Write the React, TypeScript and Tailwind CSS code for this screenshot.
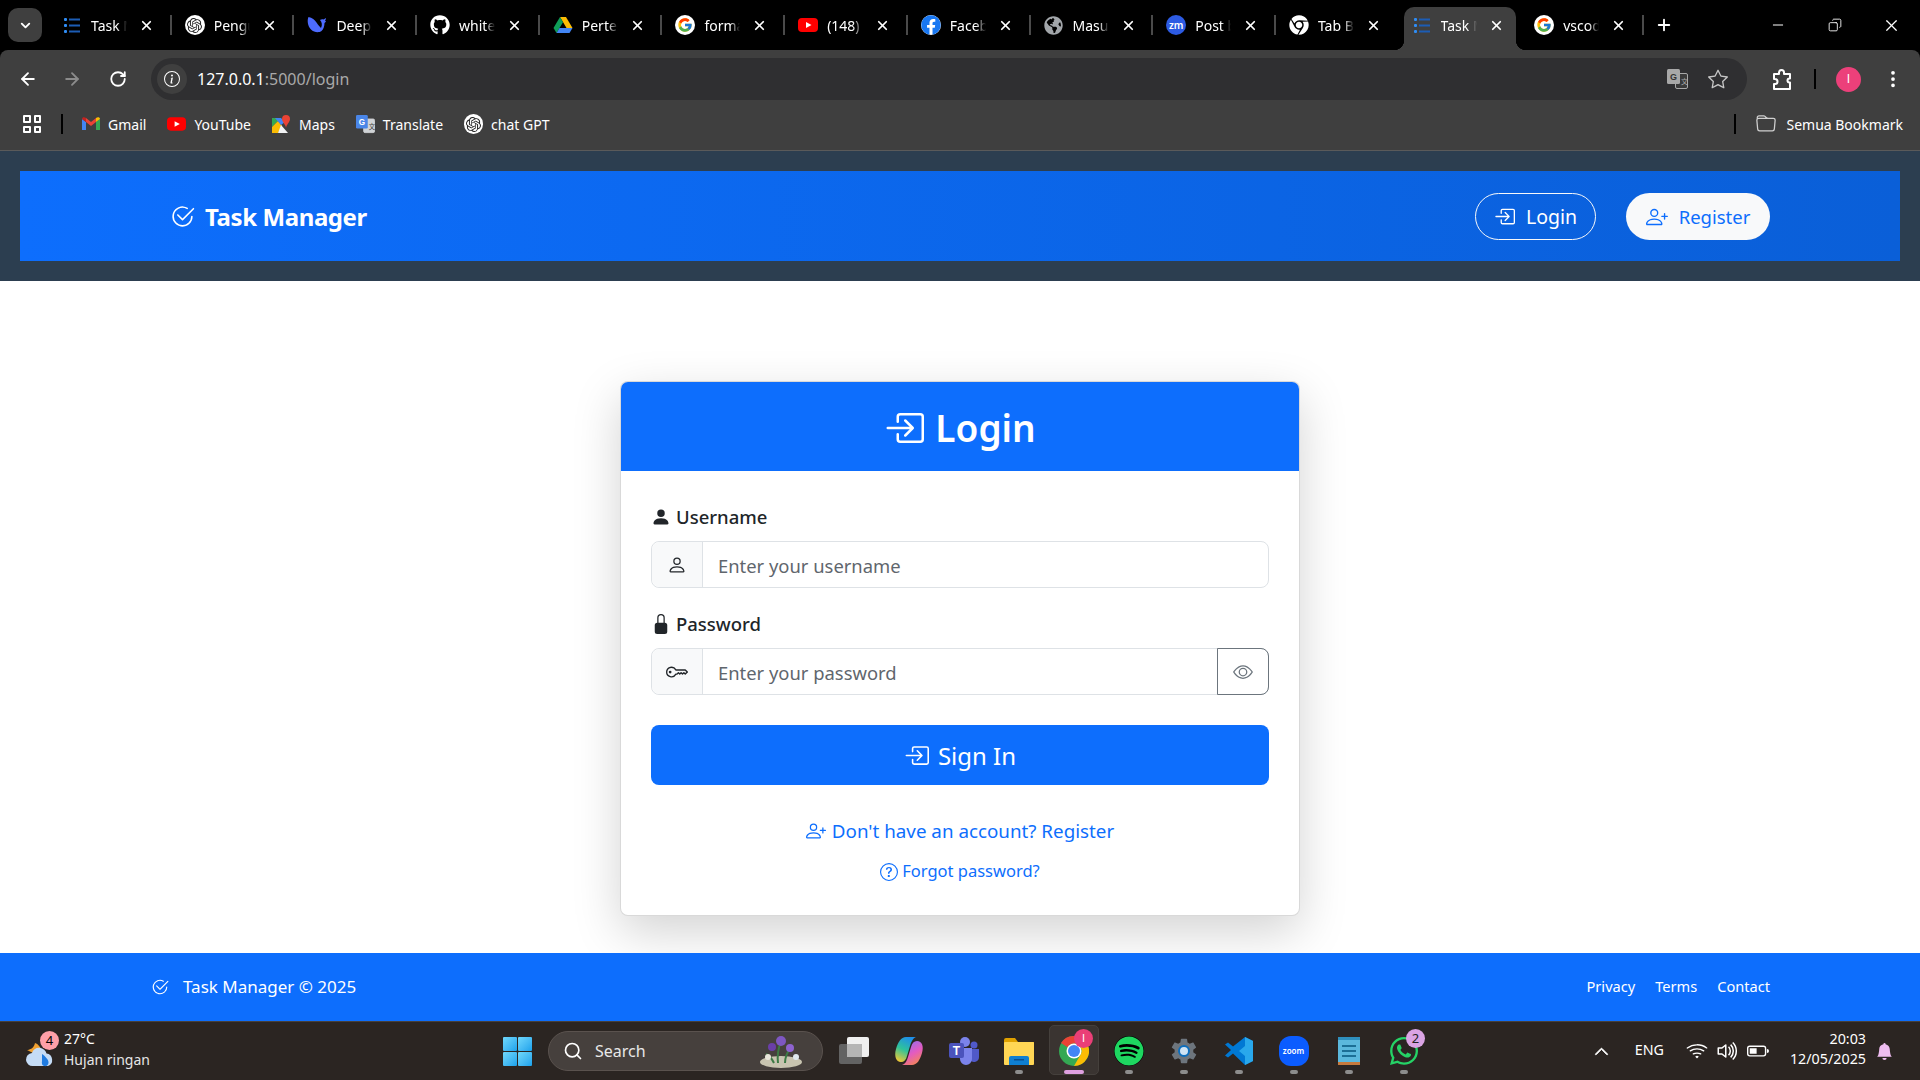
import type { ReactNode } from "react";
import { ArrowLeft, ArrowRight, ChevronDown, Copy, Minus, Plus, RotateCw, Search, X } from "lucide-react";
import {
  BsBatteryHalf,
  BsBellFill,
  BsBoxArrowInRight,
  BsCheck2Circle,
  BsChevronUp,
  BsEye,
  BsFolder,
  BsInfoCircle,
  BsKey,
  BsLockFill,
  BsPerson,
  BsPersonFill,
  BsPersonPlus,
  BsQuestionCircle,
  BsStar,
  BsThreeDotsVertical,
  BsVolumeUp,
  BsWifi,
} from "react-icons/bs";
import { FaChrome, FaFacebook, FaGithub, FaGlobeAmericas, FaSpotify, FaWhatsapp } from "react-icons/fa";
import { FcGoogle } from "react-icons/fc";
import { IoMdSettings } from "react-icons/io";
import { SiOpenai } from "react-icons/si";

function TaskListIcon() {
  return (
    <svg width="18" height="18" viewBox="0 0 18 18">
      <rect x="1" y="2" width="3" height="3" rx="1" fill="#2f8df5" />
      <rect x="1" y="8" width="3" height="3" rx="1" fill="#2f8df5" />
      <rect x="1" y="14" width="3" height="3" rx="1" fill="#2f8df5" />
      <rect x="6" y="2.500" width="11" height="2" fill="#1c5db5" />
      <rect x="6" y="8.500" width="11" height="2" fill="#1c5db5" />
      <rect x="6" y="14.500" width="11" height="2" fill="#1c5db5" />
    </svg>
  );
}

function ChatGptIcon({ size = 20 }: { size?: number }) {
  return (
    <span className="flex items-center justify-center rounded-full bg-white text-[#222]" style={{ width: size, height: size }}>
      <SiOpenai size={size - 5} />
    </span>
  );
}

function GoogleIcon() {
  return (
    <span className="flex h-[20px] w-[20px] items-center justify-center rounded-full bg-white">
      <FcGoogle size={16} />
    </span>
  );
}

function WhaleIcon() {
  return (
    <svg width="20" height="18" viewBox="0 0 20 18">
      <path
        d="M19 2c-1 .3-1.600 1-2.300 1.500C15.500 3 14 3.200 13 4c2 2 2.500 5 1 8-1-1-3-3-4.500-5.500C8 4 5 1.500 1.500 1c-1.500 3-1 9 2.500 12.500 3 3 8 3.500 10.500 1.500 2-1.500 3-5 3-8 .8-.5 1.500-1.200 1.500-2-.4.2-.8.200-1 .1C18.500 4 19 3 19 2z"
        fill="#4d6bfe"
      />
    </svg>
  );
}

function DriveIcon() {
  return (
    <svg width="20" height="18" viewBox="0 0 20 18">
      <polygon points="7,1 13,1 19.500,12 13.500,12" fill="#fbbc04" />
      <polygon points="7,1 10,6.200 3.500,17 .5,12" fill="#0f9d58" />
      <polygon points="6.500,12 19.500,12 16.500,17 3.500,17" fill="#4285f4" />
    </svg>
  );
}

function YouTubeIcon() {
  return (
    <svg width="20" height="16" viewBox="0 0 20 16">
      <rect x="0" y="1" width="20" height="14" rx="4" fill="#f00" />
      <polygon points="8,5 13.500,8 8,11" fill="#fff" />
    </svg>
  );
}

function FacebookIcon() {
  return (
    <span className="flex h-[20px] w-[20px] items-center justify-center rounded-full bg-white text-[#1877f2]">
      <FaFacebook size={20} />
    </span>
  );
}

function ZoomCircle() {
  return (
    <span className="flex h-[20px] w-[20px] items-center justify-center rounded-full bg-[#2d5be3] text-[10px] leading-none font-semibold text-white">
      zm
    </span>
  );
}

function GmailIcon() {
  return (
    <svg width="18" height="14" viewBox="0 0 18 14">
      <path d="M0 2v11h4V5z" fill="#4285f4" />
      <path d="M18 2v11h-4V5z" fill="#34a853" />
      <path d="M4 5l5 4 5-4V1L9 5 4 1z" fill="#ea4335" />
      <path d="M0 2c0-2 2.500-2.500 4-1v4z" fill="#c5221f" />
      <path d="M18 2c0-2-2.500-2.500-4-1v4z" fill="#fbbc04" />
    </svg>
  );
}

function MapsIcon() {
  return (
    <svg width="18" height="19" viewBox="0 0 18 19">
      <polygon points="0,3 9,3 0,12" fill="#34a853" />
      <polygon points="0,12 0,18 6,18 10,11 6,6" fill="#fbbc04" />
      <polygon points="6,18 16,18 9,10" fill="#f1f3f4" />
      <polygon points="9,3 3,3 9,10 13,7" fill="#4285f4" />
      <path d="M14 0a4 4 0 0 0-4 4c0 3 4 6 4 9 0-3 4-6 4-9a4 4 0 0 0-4-4z" fill="#ea4335" />
    </svg>
  );
}

function TranslateIcon({ dim = false }: { dim?: boolean }) {
  return (
    <svg width="21" height="20" viewBox="0 0 21 20">
      <rect x="8.500" y="4.500" width="12" height="15" rx="1.500" fill={dim ? "#3a3a3a" : "#d0d3d6"} stroke={dim ? "#a8a8a8" : "#d0d3d6"} />
      <rect x="0" y="0" width="13" height="15" rx="1.500" fill={dim ? "#a8a8a8" : "#4a86e8"} />
      <text x="3" y="11" fontSize="9" fontWeight="700" fill={dim ? "#333" : "#fff"} fontFamily="Liberation Sans">G</text>
      <text x="14" y="15" fontSize="7" fill={dim ? "#a8a8a8" : "#444"} fontFamily="Noto Sans CJK SC">文</text>
    </svg>
  );
}

function ExtensionIcon() {
  return (
    <svg width="21" height="23" viewBox="0 0 21 23" fill="none" stroke="#fff" strokeWidth="2" strokeLinejoin="round" className="ml-[25px]">
      <path d="M2 6h5V4.500a2.500 2.500 0 0 1 5 0V6h6v4.500h-.5a2 2 0 0 0 0 4h.5V21H2v-5h1a2.500 2.500 0 0 0 0-5H2z" />
    </svg>
  );
}

function WindowsLogo() {
  const pane = "bg-gradient-to-br from-[#6fd8fb] to-[#16a2ec] rounded-[1px]";
  return (
    <div className="grid h-[29px] w-[29px] grid-cols-2 gap-[1px]">
      <span className={pane} />
      <span className={pane} />
      <span className={pane} />
      <span className={pane} />
    </div>
  );
}

function WeatherIcon() {
  return (
    <div className="relative h-[34px] w-[30px]">
      <svg width="30" height="34" viewBox="0 0 30 34">
        <path d="M2 16c3 0 7-2 8-7 3 1 6 4 6 8l-6 3z" fill="#f0a030" />
        <path d="M8 32a6.500 6.500 0 0 1-1-13c1-4 5-6 9-5 3 1 5 3 5.500 5.500A6.500 6.500 0 0 1 23 32z" fill="#c5dcf6" />
        <path d="M17 20c3 2 7 6 6.500 9-.5 3-3 3.500-4.500 3-2-.7-2.500-2.500-2-5z" fill="#1f7be0" />
      </svg>
      <span className="absolute top-[-3px] left-[15px] flex h-[19px] w-[19px] items-center justify-center rounded-full bg-[#ffa0a8] text-[13px] text-black">4</span>
    </div>
  );
}

function TaskViewIcon() {
  return (
    <svg width="30" height="28" viewBox="0 0 30 28">
      <rect x="0" y="7" width="23" height="20" rx="2" fill="#636363" />
      <rect x="8" y="0" width="22" height="20" rx="2" fill="#f0f0f0" />
      <rect x="8" y="7" width="15" height="13" fill="#b5b5b5" />
    </svg>
  );
}

function CopilotIcon() {
  return (
    <svg width="30" height="28" viewBox="0 0 30 28">
      <defs>
        <linearGradient id="copA" x1="0.600" y1="0" x2="0.200" y2="1">
          <stop offset="0" stopColor="#1f8fe8" />
          <stop offset="0.500" stopColor="#2fc39a" />
          <stop offset="1" stopColor="#f5c832" />
        </linearGradient>
        <linearGradient id="copB" x1="0.300" y1="0" x2="0.800" y2="1">
          <stop offset="0" stopColor="#8f6ff0" />
          <stop offset="0.500" stopColor="#e45bc0" />
          <stop offset="1" stopColor="#f58a4a" />
        </linearGradient>
      </defs>
      <path d="M12 0C7 0 4 5 2 12c-2 7 0 13 5 13 3 0 5-2 6-6l3-10c1-4 3-8 6-9z" fill="url(#copA)" />
      <path d="M18 28c5 0 8-5 10-12 2-7 0-12-5-12-3 0-5 2-6 6l-3 10c-1 4-3 7-6 8z" fill="url(#copB)" />
    </svg>
  );
}

function TeamsIcon() {
  return (
    <svg width="30" height="28" viewBox="0 0 30 28">
      <circle cx="16" cy="5" r="5" fill="#7b83eb" />
      <circle cx="25" cy="8" r="3.500" fill="#5059c9" />
      <path d="M20 12h10v8a5 5 0 0 1-9 3z" fill="#5059c9" />
      <path d="M9 11h14v11a6 6 0 0 1-12 0z" fill="#7b83eb" />
      <rect x="0" y="6" width="15" height="15" rx="2" fill="#4b53bc" />
      <text x="7.500" y="18" fontSize="12" fontWeight="700" textAnchor="middle" fill="#fff" fontFamily="Liberation Sans">T</text>
    </svg>
  );
}

function FolderIcon() {
  return (
    <svg width="30" height="28" viewBox="0 0 30 28">
      <path d="M0 3a2 2 0 0 1 2-2h9l3 4h16v4H0z" fill="#e0a100" />
      <rect x="0" y="5" width="30" height="23" rx="1" fill="#ffd655" />
      <path d="M5 28v-7a2 2 0 0 1 2-2h16a2 2 0 0 1 2 2v7z" fill="#0f7fd1" />
      <rect x="10" y="22" width="10" height="1.500" fill="#0a4f8f" />
    </svg>
  );
}

function ChromeColor() {
  return (
    <svg width="30" height="30" viewBox="0 0 30 30">
      <circle cx="15" cy="15" r="15" fill="#34a853" />
      <path d="M15 0a15 15 0 0 1 13 7.500H15a7.500 7.500 0 0 0-6.500 3.800L2 7A15 15 0 0 1 15 0z" fill="#ea4335" />
      <path d="M28 7.500A15 15 0 0 1 15 30l6.500-11.300A7.500 7.500 0 0 0 21.500 11z" fill="#fbbc04" />
      <circle cx="15" cy="15" r="7.500" fill="#fff" />
      <circle cx="15" cy="15" r="6" fill="#4285f4" />
    </svg>
  );
}

function SettingsIcon() {
  return (
    <span className="relative flex h-[30px] w-[30px] items-center justify-center text-[#6d757d]">
      <IoMdSettings size={32} />
      <span className="absolute h-[12px] w-[12px] rounded-full border-[2px] border-[#0d6ebd] bg-[#cfe4f5]" />
    </span>
  );
}

function VsCodeIcon() {
  return (
    <svg width="30" height="30" viewBox="0 0 30 30">
      <path d="M21 1l8 4v20l-8 4-12-11.500-5 4-3-2 6-5.500-6-5.500 3-2 5 4z" fill="#0078d4" />
      <path d="M21 1l8 4v20l-8 4V20l-6-5 6-5z" fill="#29a8ec" />
    </svg>
  );
}

function ZoomApp() {
  return (
    <span className="flex h-[30px] w-[30px] items-center justify-center rounded-[12px] bg-[#0b5cff] text-[8px] font-semibold text-white">
      zoom
    </span>
  );
}

function NotepadIcon() {
  return (
    <svg width="24" height="30" viewBox="0 0 24 30">
      <rect x="1" y="2" width="22" height="26" fill="#5bb8dd" />
      <rect x="1" y="26" width="22" height="3" fill="#c77a3d" />
      <rect x="1" y="1" width="22" height="3" fill="#2f8fbd" />
      <rect x="5" y="9" width="14" height="2" fill="#1c6f96" />
      <rect x="5" y="14" width="14" height="2" fill="#1c6f96" />
      <rect x="5" y="19" width="14" height="2" fill="#1c6f96" />
    </svg>
  );
}

const tabs: { title: string; icon: ReactNode; active?: boolean; noSep?: boolean }[] = [
  { title: "Task Manager", icon: <TaskListIcon /> },
  { title: "Pengujian", icon: <ChatGptIcon /> },
  { title: "DeepSeek", icon: <WhaleIcon /> },
  { title: "white-box", icon: <FaGithub size={20} color="#fff" /> },
  { title: "Pertemuan", icon: <DriveIcon /> },
  { title: "format", icon: <GoogleIcon /> },
  { title: "(148) YouTube", icon: <YouTubeIcon /> },
  { title: "Facebook", icon: <FacebookIcon /> },
  { title: "Masuk", icon: <FaGlobeAmericas size={19} color="#a2a6aa" /> },
  { title: "Post baru", icon: <ZoomCircle /> },
  { title: "Tab Baru", icon: <FaChrome size={20} color="#fff" />, noSep: true },
  { title: "Task Manager", icon: <TaskListIcon />, active: true, noSep: true },
  { title: "vscode", icon: <GoogleIcon /> },
];

const bookmarks: { label: string; icon: ReactNode; mr: string }[] = [
  { label: "Gmail", icon: <GmailIcon />, mr: "mr-[21px]" },
  { label: "YouTube", icon: <YouTubeIcon />, mr: "mr-[21px]" },
  { label: "Maps", icon: <MapsIcon />, mr: "mr-[21px]" },
  { label: "Translate", icon: <TranslateIcon />, mr: "mr-[21px]" },
  { label: "chat GPT", icon: <ChatGptIcon />, mr: "" },
];

const dockApps: { icon: ReactNode; dot?: boolean; badge?: ReactNode; active?: boolean }[] = [
  { icon: <TaskViewIcon /> },
  { icon: <CopilotIcon /> },
  { icon: <TeamsIcon /> },
  { icon: <FolderIcon />, dot: true },
  {
    icon: <ChromeColor />,
    active: true,
    badge: <span className="absolute top-[7px] left-[28px] flex h-[19px] w-[19px] items-center justify-center rounded-full bg-[#ea3f77] font-['Liberation_Sans',sans-serif] text-[11px] text-white">I</span>,
  },
  { icon: <FaSpotify size={30} className="rounded-full bg-black text-[#1ed760]" />, dot: true },
  { icon: <SettingsIcon />, dot: true },
  { icon: <VsCodeIcon />, dot: true },
  { icon: <ZoomApp />, dot: true },
  { icon: <NotepadIcon />, dot: true },
  {
    icon: <FaWhatsapp size={32} color="#25d366" />,
    dot: true,
    badge: <span className="absolute top-[7px] left-[30px] flex h-[19px] w-[19px] items-center justify-center rounded-full bg-[#dba4e4] text-[13px] text-[#222]">2</span>,
  },
];

function TabStrip() {
  return (
    <div className="flex h-[50px] items-center bg-black text-white">
      <div className="ml-[8px] flex h-[34px] w-[34px] items-center justify-center rounded-[10px] bg-[#3f3f3f]">
        <ChevronDown size={15} strokeWidth={3} />
      </div>
      <div className="ml-[7px] flex h-full">
        {tabs.map((tab, i) => (
          <div key={i} className="relative flex h-full w-[122.7px] items-center pl-[13px]">
            {tab.active && (
              <>
                <span className="absolute top-[7px] right-[5px] bottom-0 left-[5px] rounded-t-[10px] bg-[#3f3f3f]" />
                <span className="absolute bottom-0 left-[-5px] h-[10px] w-[10px] bg-[radial-gradient(circle_at_0_0,transparent_10px,#3f3f3f_10.5px)]" />
                <span className="absolute right-[-5px] bottom-0 h-[10px] w-[10px] bg-[radial-gradient(circle_at_100%_0,transparent_10px,#3f3f3f_10.5px)]" />
              </>
            )}
            <span className="relative flex w-[20px] items-center justify-center">{tab.icon}</span>
            <span className="relative ml-[9px] w-[36px] overflow-hidden text-[14px] whitespace-nowrap [mask-image:linear-gradient(to_right,black_72%,transparent)]">
              {tab.title}
            </span>
            <X size={15} strokeWidth={2.8} className="relative ml-[12px]" />
            {!tab.noSep && <span className="absolute top-[15px] right-0 h-[20px] w-[2px] bg-[#4a4a4a]" />}
          </div>
        ))}
      </div>
      <Plus size={18} strokeWidth={2.5} className="ml-[11px]" />
      <div className="ml-auto flex h-full items-center">
        <div className="flex w-[57px] justify-center"><Minus size={16} strokeWidth={1.5} /></div>
        <div className="flex w-[57px] justify-center"><Copy size={14} strokeWidth={1.5} className="-scale-x-100" /></div>
        <div className="flex w-[57px] justify-center"><X size={19} strokeWidth={1.5} /></div>
      </div>
    </div>
  );
}

function Toolbar() {
  return (
    <div className="flex h-[50px] items-center rounded-t-[8px] bg-[#3f3f3f] pt-[8px] pl-[18px] text-white">
      <ArrowLeft size={20} strokeWidth={2.2} />
      <ArrowRight size={20} strokeWidth={2.2} className="ml-[24px] text-[#8c8c8c]" />
      <RotateCw size={18} strokeWidth={2.4} className="ml-[27px]" />
      <div className="ml-[24px] flex h-[42px] w-[1596px] items-center rounded-full bg-[#2f2f31] pr-[19px] pl-[6px]">
        <span className="flex h-[30px] w-[30px] items-center justify-center rounded-full bg-[#3f3f3f]">
          <BsInfoCircle size={16} />
        </span>
        <span className="ml-[10px] text-[16px]">
          127.0.0.1<span className="text-[#a9a9a9]">:5000/login</span>
        </span>
        <span className="ml-auto"><TranslateIcon dim /></span>
        <BsStar size={20} className="ml-[20px] text-[#c7c7c7]" />
      </div>
      <ExtensionIcon />
      <span className="ml-[21px] h-[20px] w-[2px] bg-black" />
      <span className="ml-[20px] flex h-[25px] w-[25px] items-center justify-center rounded-full bg-[#ec407a] font-['Liberation_Sans',sans-serif] text-[12px]">I</span>
      <BsThreeDotsVertical size={20} className="ml-[22px]" />
    </div>
  );
}

function BookmarksBar() {
  return (
    <div className="flex h-[51px] items-center border-b border-[#5a5a5a] bg-[#3f3f3f] pr-[17px] pb-[2px] pl-[23px] text-[14px] text-white">
      <div className="grid h-[18px] w-[18px] grid-cols-2 gap-[3px]">
        <span className="rounded-[1px] border-2 border-white" />
        <span className="rounded-[1px] border-2 border-white" />
        <span className="rounded-[1px] border-2 border-white" />
        <span className="rounded-[1px] border-2 border-white" />
      </div>
      <span className="mr-[18px] ml-[20px] h-[20px] w-[2px] bg-black" />
      {bookmarks.map((b) => (
        <div key={b.label} className={`flex items-center gap-[8px] ${b.mr}`}>
          <span className="flex w-[19px] justify-center">{b.icon}</span>
          {b.label}
        </div>
      ))}
      <span className="mr-[20px] ml-auto h-[20px] w-[2px] bg-black" />
      <BsFolder size={20} className="mr-[10px] text-[#d0d0d0]" />
      Semua Bookmark
    </div>
  );
}

function Navbar() {
  return (
    <header className="bg-[#2c3e50] p-[20px]">
      <nav className="flex h-[90px] items-center bg-gradient-to-r from-[#0d6efd] to-[#0a5fd8] pr-[130px] pl-[150px] text-white">
        <BsCheck2Circle size={25} />
        <span className="mt-[1px] ml-[10px] text-[24px] font-bold tracking-[-0.4px]">Task Manager</span>
        <a className="ml-auto flex h-[47px] w-[121px] items-center justify-center gap-[11px] rounded-full border border-[#f8f9fa] pt-[1px] text-[19.5px]">
          <BsBoxArrowInRight size={21} /> Login
        </a>
        <a className="ml-[30px] flex h-[47px] w-[144px] items-center justify-center gap-[11px] rounded-full bg-[#f8f9fa] pt-[1px] text-[18.5px] text-[#0d6efd]">
          <BsPersonPlus size={22} /> Register
        </a>
      </nav>
    </header>
  );
}

function LoginCard() {
  return (
    <div className="h-[535px] w-[680px] overflow-hidden rounded-[8px] border border-black/15 bg-white shadow-[0_16px_48px_rgba(0,0,0,0.175)]">
      <div className="flex h-[89px] items-center justify-center gap-[11px] bg-[#0d6efd] pt-[2px] text-[37px] font-semibold text-white">
        <BsBoxArrowInRight size={40} /> Login
      </div>
      <div className="px-[30px] pt-[30px]">
        <label className="flex h-[32px] items-center gap-[5px] text-[18.5px] font-medium text-[#212529]">
          <BsPersonFill size={20} /> Username
        </label>
        <div className="mt-[8px] flex h-[47px] rounded-[8px] border border-[#dee2e6]">
          <span className="flex w-[51px] items-center justify-center rounded-l-[8px] border-r border-[#dee2e6] bg-[#f8f9fa] text-[#212529]">
            <BsPerson size={20} />
          </span>
          <input placeholder="Enter your username" className="min-w-0 flex-1 rounded-r-[8px] px-[15px] pt-[3px] text-[18.4px] placeholder:text-[#5f666d]" />
        </div>
        <label className="mt-[20px] flex h-[32px] items-center gap-[5px] text-[18.5px] font-medium text-[#212529]">
          <BsLockFill size={20} /> Password
        </label>
        <div className="mt-[8px] flex h-[47px] rounded-[8px] border border-[#dee2e6]">
          <span className="flex w-[51px] items-center justify-center rounded-l-[8px] border-r border-[#dee2e6] bg-[#f8f9fa] text-[#212529]">
            <BsKey size={22} />
          </span>
          <input placeholder="Enter your password" className="min-w-0 flex-1 px-[15px] pt-[3px] text-[18.4px] placeholder:text-[#5f666d]" />
          <button className="my-[-1px] mr-[-1px] flex w-[52px] items-center justify-center rounded-r-[8px] border border-[#6c757d] text-[#6c757d]">
            <BsEye size={20} />
          </button>
        </div>
        <button className="mt-[30px] flex h-[60px] w-full items-center justify-center gap-[9px] rounded-[8px] bg-[#0d6efd] pt-[1px] text-[24px] text-white">
          <BsBoxArrowInRight size={25} /> Sign In
        </button>
        <a className="mt-[32px] flex items-center justify-center gap-[6px] text-[18.8px] text-[#0d6efd]">
          <BsPersonPlus size={20} /> Don&apos;t have an account? Register
        </a>
        <a className="mt-[14px] flex items-center justify-center gap-[4px] text-[16.5px] text-[#0d6efd]">
          <BsQuestionCircle size={18} /> Forgot password?
        </a>
      </div>
    </div>
  );
}

function SiteFooter() {
  return (
    <footer className="relative flex h-[68px] items-center bg-[#0d6efd] pr-[150px] pl-[151px] text-white">
      <BsCheck2Circle size={18} />
      <span className="ml-[14px] text-[17px]">Task Manager © 2025</span>
      <div className="ml-auto flex gap-[20px] text-[14.6px]">
        <a>Privacy</a>
        <a>Terms</a>
        <a>Contact</a>
      </div>
    </footer>
  );
}

function Taskbar() {
  return (
    <div className="flex h-[59px] items-center border-t border-[#47403b] bg-[#2b2522] text-white">
      <div className="flex w-[503px] items-center pl-[25px]">
        <WeatherIcon />
        <div className="ml-[9px] pb-[4px] text-[14px] leading-[21px]">
          <div>27°C</div>
          <div className="text-[#e6e6e6]">Hujan ringan</div>
        </div>
      </div>
      <WindowsLogo />
      <div className="relative ml-[16px] flex h-[40px] w-[275px] items-center rounded-full border border-[#5a524e] bg-[#46403d] pl-[14px] text-[16px]">
        <Search size={20} strokeWidth={2} />
        <span className="ml-[12px] text-[#e8e8e8]">Search</span>
        <svg width="46" height="36" viewBox="0 0 46 36" className="absolute right-[18px] bottom-[1px]">
          <ellipse cx="23" cy="29" rx="21" ry="6" fill="#c8c4b0" />
          <path d="M20 30c-1-8 0-14 3-22M27 30c0-6 3-12 6-16M16 30c-2-4-5-8-8-9" stroke="#3c7a45" strokeWidth="2" fill="none" />
          <circle cx="23" cy="8" r="5" fill="#7e57c2" />
          <circle cx="14" cy="14" r="4" fill="#6a3fa8" />
          <circle cx="32" cy="15" r="4" fill="#8e63cf" />
          <circle cx="10" cy="24" r="3" fill="#e9e6da" />
          <circle cx="38" cy="24" r="3" fill="#dfe9ee" />
        </svg>
      </div>
      <div className="ml-[3px] flex">
        {dockApps.map((app, i) => (
          <div key={i} className="relative flex h-[58px] w-[55px] items-center justify-center">
            {app.active && <span className="absolute top-[3px] left-[2.500px] h-[50px] w-[50px] rounded-[5px] border border-[#45403c] bg-[#3a3431]" />}
            <span className="relative flex items-center justify-center">{app.icon}</span>
            {app.badge}
            {app.dot && <span className="absolute bottom-[6px] h-[4px] w-[8px] rounded-full bg-[#8d8d8d]" />}
            {app.active && <span className="absolute bottom-[6px] h-[4px] w-[20px] rounded-full bg-[#dea0e0]" />}
          </div>
        ))}
      </div>
      <div className="ml-auto flex items-center pr-[27px] text-[14.3px]">
        <BsChevronUp size={15} strokeWidth={1} />
        <span className="ml-[26px] pb-[2px]">ENG</span>
        <BsWifi size={22} className="ml-[22px]" />
        <BsVolumeUp size={24} className="ml-[8px]" />
        <BsBatteryHalf size={22} className="ml-[7px]" />
        <div className="ml-[21px] pb-[4px] text-right leading-[20px]">
          <div>20:03</div>
          <div>12/05/2025</div>
        </div>
        <BsBellFill size={17} className="ml-[10px] text-[#eebcf0]" />
      </div>
    </div>
  );
}

export default function App() {
  return (
    <div className="flex h-[1080px] w-[1920px] flex-col overflow-hidden bg-white font-['Noto_Sans',sans-serif]">
      <div className="bg-black">
        <TabStrip />
        <Toolbar />
        <BookmarksBar />
      </div>
      <Navbar />
      <main className="flex flex-1 justify-center pt-[100px]">
        <LoginCard />
      </main>
      <SiteFooter />
      <Taskbar />
    </div>
  );
}
